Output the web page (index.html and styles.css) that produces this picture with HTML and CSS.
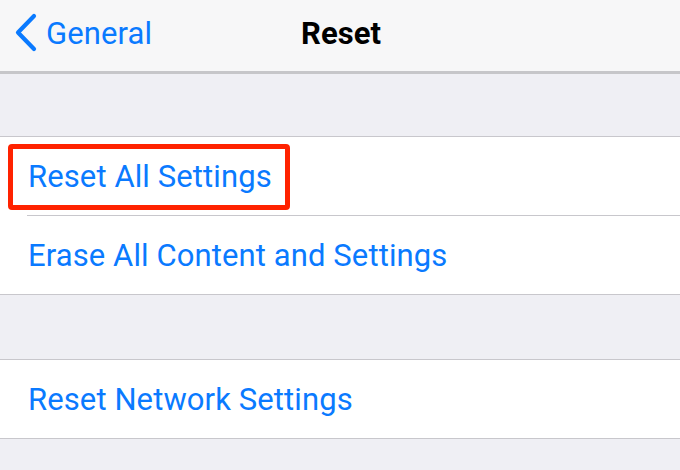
FILE: index.html
```html
<!DOCTYPE html>
<html lang="en">
<head>
<meta charset="utf-8">
<title>Reset</title>
<link rel="stylesheet" href="styles.css">
</head>
<body>
<div class="page">
  <header class="nav">
    <div class="back">
      <svg class="chev" width="24" height="40" viewBox="0 0 24 40" aria-hidden="true">
        <path d="M20 3 L4 19.5 L20 36" fill="none" stroke="#0a7aff" stroke-width="4.2" stroke-linecap="round" stroke-linejoin="round"/>
      </svg>
      <span class="back-label">General</span>
    </div>
    <div class="title">Reset</div>
  </header>
  <div class="gap first"></div>
  <section class="group">
    <div class="row highlighted">
      <span class="label">Reset All Settings</span>
      <span class="mark"></span>
    </div>
    <div class="sep"></div>
    <div class="row"><span class="label">Erase All Content and Settings</span></div>
  </section>
  <div class="gap second"></div>
  <section class="group">
    <div class="row"><span class="label">Reset Network Settings</span></div>
  </section>
</div>
</body>
</html>
```
FILE: styles.css
```css
html, body {
  margin: 0;
  padding: 0;
  background: #efeff4;
  height: 100%;
  overflow: hidden;
}
.page {
  font-family: Roboto, "Liberation Sans", sans-serif;
  color: #0a7aff;
}
.nav {
  position: relative;
  height: 71px;
  background: #f7f7f8;
  border-bottom: 3px solid #c6c6c9;
  display: flex;
  align-items: center;
  justify-content: center;
}
.back {
  position: absolute;
  left: 14px;
  top: 13px;
  display: flex;
  align-items: center;
  gap: 8px;
}
.chev { display: block; }
.back-label {
  font-size: 31px;
  color: #0a7aff;
  letter-spacing: 0.1px;
}
.title {
  font-size: 31px;
  font-weight: 700;
  color: #000;
  margin-left: 2px;
  margin-top: -4px;
}
.gap.first { height: 62px; }
.gap.second { height: 64px; }
.group {
  background: #fff;
  border-top: 1px solid #c8c7cc;
  border-bottom: 1px solid #c8c7cc;
}
.row {
  position: relative;
  height: 78px;
  display: flex;
  align-items: center;
  padding-left: 28px;
}
.label {
  font-size: 31px;
  color: #0a7aff;
  letter-spacing: 0.1px;
}
.sep {
  height: 1px;
  background: #c8c7cc;
  margin-left: 27px;
}
.mark {
  position: absolute;
  left: 8px;
  top: 7px;
  width: 282px;
  height: 66px;
  box-sizing: border-box;
  border: 5px solid #ff2200;
  border-radius: 4px;
}
```
